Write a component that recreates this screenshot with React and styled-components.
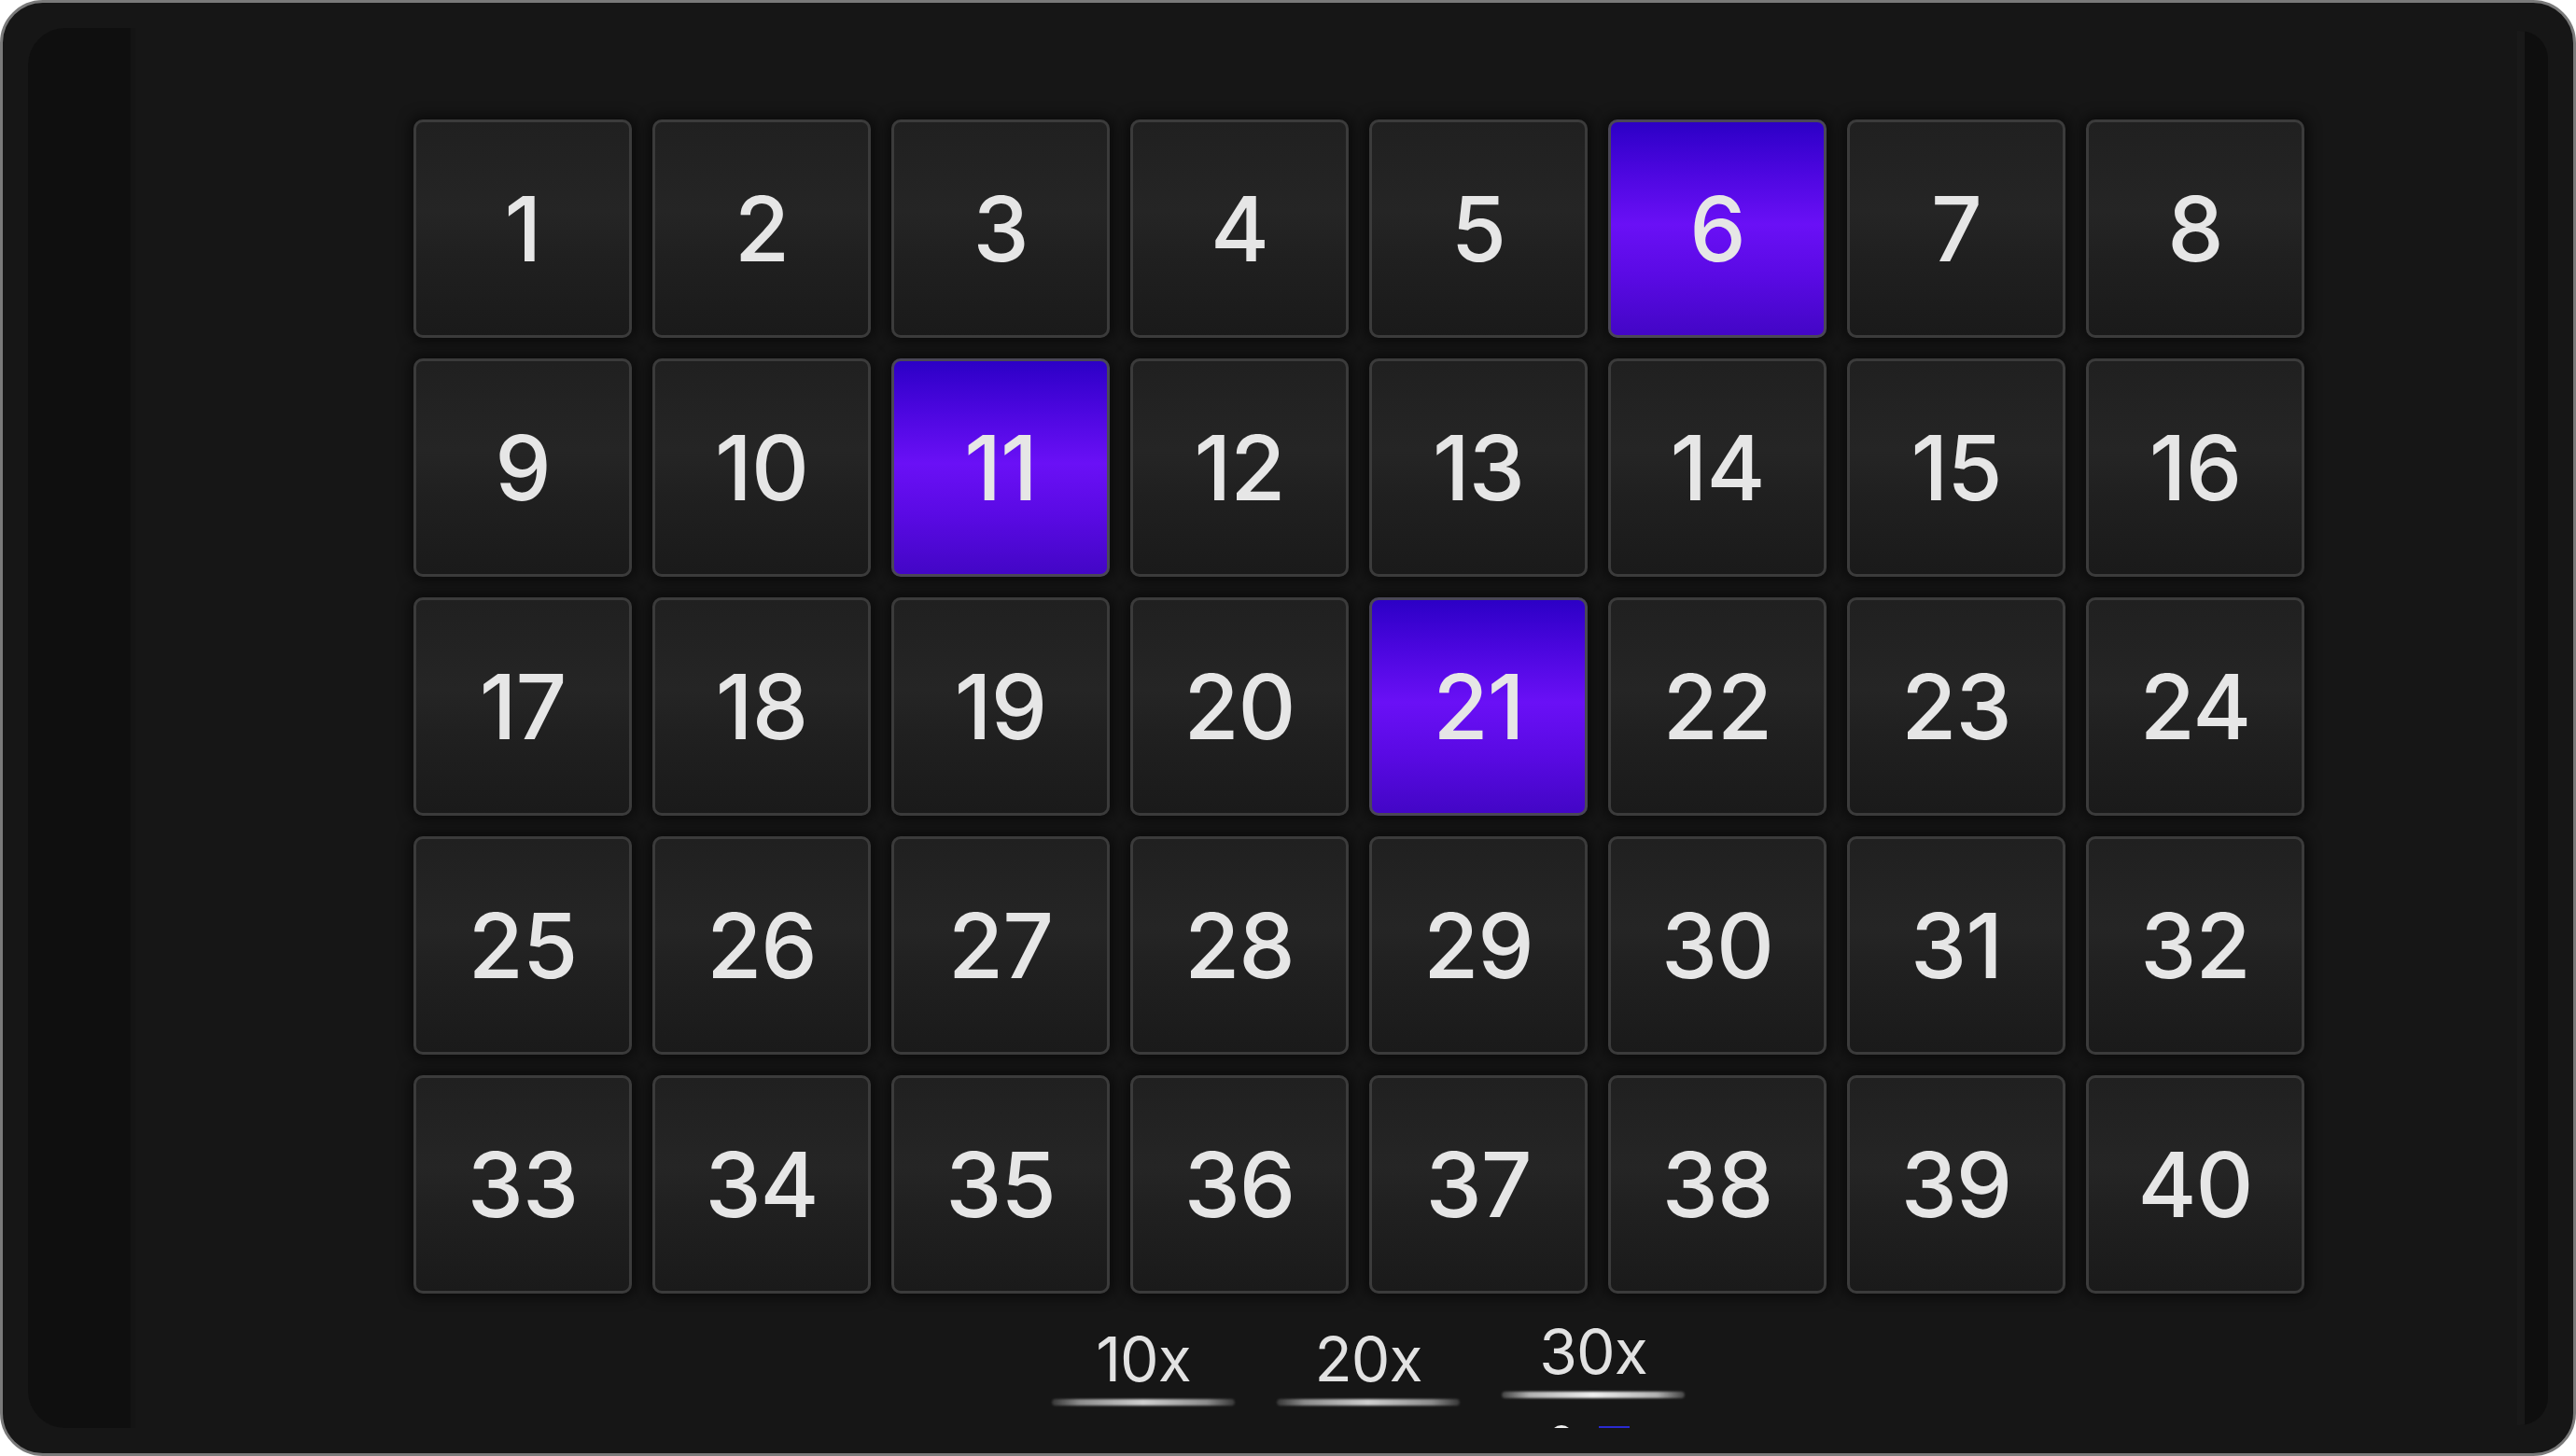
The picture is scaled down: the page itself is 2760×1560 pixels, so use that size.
import styled, { createGlobalStyle } from 'styled-components';

const GlobalStyle = createGlobalStyle`
  html, body {
    margin: 0;
    padding: 0;
    background: #ffffff;
  }
  body {
    font-family: Inter, 'Noto Sans', sans-serif;
  }
`;

const Frame = styled.div`
  box-sizing: border-box;
  display: flex;
  width: 2760px;
  height: 1560px;
  padding: 27px;
  border: 3px solid #7a7a7a;
  border-radius: 46px;
  background: #161616;
  overflow: hidden;
`;

const LeftRail = styled.div`
  flex: 0 0 110px;
  border-radius: 40px 0 0 40px;
  background: #0f0f0f;
  border-right: 5px solid #141414;
`;

const RightRail = styled.div`
  flex: 0 0 25px;
  margin: 3px 0;
  border-radius: 0 30px 30px 0;
  background: #0e0e0e;
  border-left: 8px solid #191919;
`;

const Main = styled.div`
  flex: 1;
  display: flex;
  flex-direction: column;
  padding-top: 98px;
  overflow: hidden;
`;

const Board = styled.div`
  display: grid;
  grid-template-columns: repeat(8, 234px);
  grid-auto-rows: 234px;
  gap: 22px;
  margin-left: 298px;
`;

const Tile = styled.div`
  box-sizing: border-box;
  display: flex;
  align-items: center;
  justify-content: center;
  border: 3px solid ${p => (p.$picked ? '#4a4756' : '#3b3b3b')};
  border-radius: 10px;
  background: ${p =>
    p.$picked
      ? 'linear-gradient(180deg, #2c00c6 0%, #4a06de 22%, #6a10f6 48%, #5a0ae4 72%, #4306c6 100%)'
      : 'linear-gradient(180deg, #202020 0%, #252525 42%, #202020 62%, #1a1a1a 100%)'};
  box-shadow: 0 0 14px 4px rgba(0, 0, 0, 0.55);
  color: #e6e6e6;
  font-size: 96px;
  font-weight: 500;
  line-height: 1;
  letter-spacing: -1px;
`;

const Tabs = styled.div`
  display: flex;
  gap: 45px;
  margin: 37px 0 0 982px;
`;

const Tab = styled.div`
  display: flex;
  flex-direction: column;
  align-items: center;
  width: 196px;
  transform: ${p => (p.$active ? 'translateY(-8px)' : 'none')};
`;

const TabLabel = styled.span`
  display: block;
  height: 66px;
  color: #e2e2e2;
  font-size: 66px;
  font-weight: 400;
  line-height: 66px;
  letter-spacing: -1px;
`;

const Glow = styled.div`
  width: 196px;
  height: 7px;
  margin-top: 10px;
  border-radius: 4px;
  background: ${p =>
    p.$active
      ? 'linear-gradient(90deg, rgba(170,170,170,0.3), #b0b0b0 15%, #f0f0f0 50%, #b0b0b0 85%, rgba(170,170,170,0.3))'
      : 'linear-gradient(90deg, rgba(150,150,150,0.25), #8c8c8c 15%, #d0d0d0 50%, #8c8c8c 85%, rgba(150,150,150,0.25))'};
  filter: blur(1px);
`;

const Slider = styled.div`
  display: flex;
  align-items: flex-start;
  gap: 28px;
  width: 196px;
  margin-top: 29px;
  padding-left: 52px;
  box-sizing: border-box;
`;

const Thumb = styled.div`
  flex: 0 0 24px;
  height: 24px;
  border-radius: 50%;
  background: #f0f0f0;
`;

const Track = styled.div`
  flex: 0 0 33px;
  height: 2px;
  margin-top: 1px;
  background: #2a2ad0;
`;

const picked = [6, 11, 21];
const multipliers = ['10x', '20x', '30x'];

export default function App() {
  return (
    <>
      <GlobalStyle />
      <Frame>
        <LeftRail />
        <Main>
          <Board>
            {Array.from({ length: 40 }, (_, i) => i + 1).map(n => (
              <Tile key={n} $picked={picked.includes(n)}>
                {n}
              </Tile>
            ))}
          </Board>
          <Tabs>
            {multipliers.map((m, i) => {
              const active = i === multipliers.length - 1;
              return (
                <Tab key={m} $active={active}>
                  <TabLabel>{m}</TabLabel>
                  <Glow $active={active} />
                  {active && (
                    <Slider>
                      <Thumb />
                      <Track />
                    </Slider>
                  )}
                </Tab>
              );
            })}
          </Tabs>
        </Main>
        <RightRail />
      </Frame>
    </>
  );
}
